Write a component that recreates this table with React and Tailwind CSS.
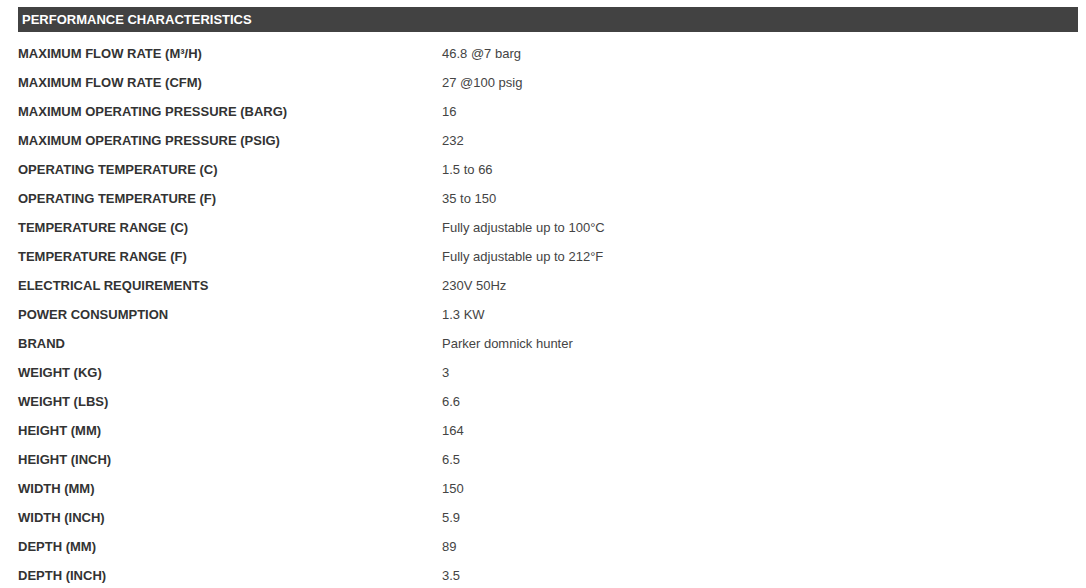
const specs = [
  ['MAXIMUM FLOW RATE (M³/H)', '46.8 @7 barg'],
  ['MAXIMUM FLOW RATE (CFM)', '27 @100 psig'],
  ['MAXIMUM OPERATING PRESSURE (BARG)', '16'],
  ['MAXIMUM OPERATING PRESSURE (PSIG)', '232'],
  ['OPERATING TEMPERATURE (C)', '1.5 to 66'],
  ['OPERATING TEMPERATURE (F)', '35 to 150'],
  ['TEMPERATURE RANGE (C)', 'Fully adjustable up to 100°C'],
  ['TEMPERATURE RANGE (F)', 'Fully adjustable up to 212°F'],
  ['ELECTRICAL REQUIREMENTS', '230V 50Hz'],
  ['POWER CONSUMPTION', '1.3 KW'],
  ['BRAND', 'Parker domnick hunter'],
  ['WEIGHT (KG)', '3'],
  ['WEIGHT (LBS)', '6.6'],
  ['HEIGHT (MM)', '164'],
  ['HEIGHT (INCH)', '6.5'],
  ['WIDTH (MM)', '150'],
  ['WIDTH (INCH)', '5.9'],
  ['DEPTH (MM)', '89'],
  ['DEPTH (INCH)', '3.5'],
];

export default function App() {
  return (
    <div className="bg-white h-[588px] overflow-hidden pl-[18px] pr-[8px] pt-[7px] font-['Liberation_Sans',Arial,sans-serif] text-[13px]">
      <div className="h-[25px] bg-[#424242] flex items-center pl-[4px] font-bold text-white">
        PERFORMANCE CHARACTERISTICS
      </div>
      <div className="pt-[7px]">
        {specs.map(([label, value]) => (
          <div key={label} className="flex items-center h-[29px]">
            <div className="w-[424px] font-bold text-[#333]">{label}</div>
            <div className="text-[#444]">{value}</div>
          </div>
        ))}
      </div>
    </div>
  );
}
